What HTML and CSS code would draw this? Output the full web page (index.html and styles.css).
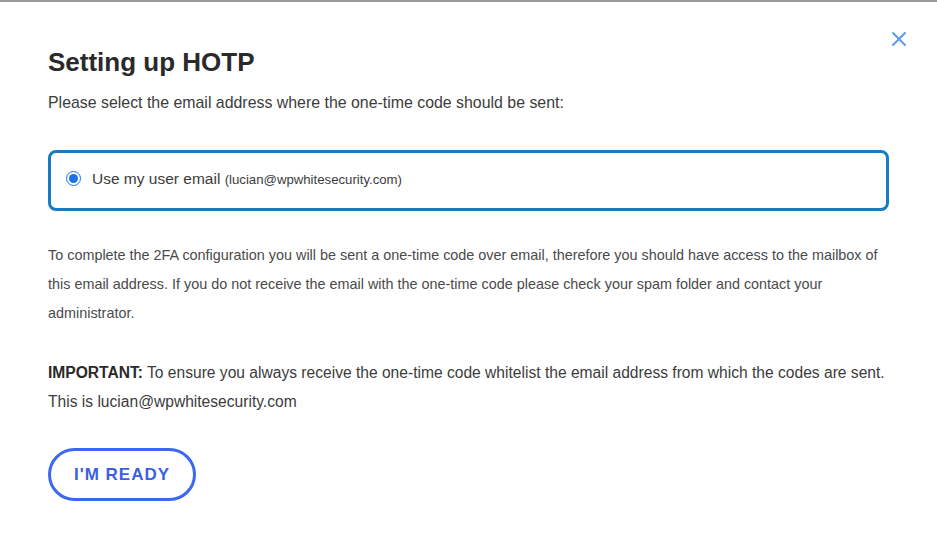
FILE: index.html
```html
<!DOCTYPE html>
<html lang="en">
<head>
    <meta charset="UTF-8">
    <meta name="viewport" content="width=device-width, initial-scale=1.0">
    <title>Setting up HOTP</title>
    <link rel="stylesheet" href="styles.css">
</head>
<body>
    <div class="modal">
        <button type="button" class="close-btn" aria-label="Close">
            <svg width="16" height="16" viewBox="0 0 16 16">
                <path d="M2 2 L14 14 M14 2 L2 14" stroke="#5b9cf0" stroke-width="2" stroke-linecap="round" fill="none"/>
            </svg>
        </button>

        <h2 class="modal-title">Setting up HOTP</h2>
        <p class="intro">Please select the email address where the one-time code should be sent:</p>

        <label class="email-option">
            <input type="radio" name="email" checked>
            <span class="option-label">Use my user email <small>(lucian@wpwhitesecurity.com)</small></span>
        </label>

        <p class="info">To complete the 2FA configuration you will be sent a one-time code over email, therefore you should have access to the mailbox of this email address. If you do not receive the email with the one-time code please check your spam folder and contact your administrator.</p>

        <p class="info important"><strong>IMPORTANT:</strong> To ensure you always receive the one-time code whitelist the email address from which the codes are sent. This is lucian@wpwhitesecurity.com</p>

        <button type="button" class="btn-ready">I'm Ready</button>
    </div>
</body>
</html>
```

FILE: styles.css
```css
* {
    margin: 0;
    padding: 0;
    box-sizing: border-box;
}

body {
    background: #fff;
    border-top: 2px solid #9a9a9a;
    font-family: 'Liberation Sans', Arial, sans-serif;
    color: #3c3c3c;
}

.modal {
    position: relative;
    padding: 44px 48px 30px 48px;
}

.close-btn {
    position: absolute;
    top: 29px;
    right: 30px;
    background: none;
    border: none;
    cursor: pointer;
    line-height: 0;
}

.modal-title {
    font-size: 26px;
    font-weight: bold;
    color: #2a2a2a;
    line-height: 32px;
}

.intro {
    margin-top: 15px;
    font-size: 15.9px;
    color: #3c3c3c;
    line-height: 20px;
}

/* Email choice */
.email-option {
    display: flex;
    align-items: center;
    gap: 11px;
    margin-top: 37px;
    height: 61px;
    padding: 0 15px 4px 15px;
    border: 3px solid #1b7bc2;
    border-radius: 8px;
    cursor: pointer;
}

.email-option input {
    width: 15px;
    height: 15px;
    margin: 0;
    accent-color: #1a73e8;
}

.option-label {
    font-size: 15.5px;
    color: #3c3c3c;
}

.option-label small {
    font-size: 13.2px;
}

.info {
    font-size: 14.4px;
    line-height: 29px;
    color: #4a4a4a;
    margin-top: 30px;
}

.info.important {
    font-size: 15.6px;
    color: #3c3c3c;
}

.info strong {
    color: #2a2a2a;
}

.btn-ready {
    margin-top: 32px;
    width: 148px;
    height: 53px;
    background: #fff;
    border: 3px solid #3b68ee;
    border-radius: 27px;
    color: #3a5fe3;
    font-family: 'Liberation Sans', Arial, sans-serif;
    font-size: 17px;
    font-weight: bold;
    text-transform: uppercase;
    letter-spacing: 1px;
    cursor: pointer;
}
```
